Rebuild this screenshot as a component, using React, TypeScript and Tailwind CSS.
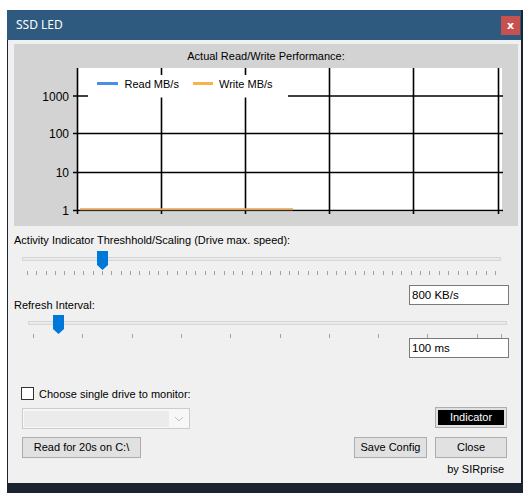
import React from "react";

const F = "font-['Liberation_Sans',Arial,sans-serif]";

function Chart() {
  const hy = [52, 89.5, 128.5, 166.5];
  const labels = ["1000", "100", "10", "1"];
  const vx = [63.5, 147.5, 231.5, 315.5, 399.5, 484.5];
  return (
    <div className="ml-[6px] mt-[4px] w-[504px] h-[182px] bg-[#d3d3d3]">
      <div className="h-[24px] pt-[5px] text-center text-[11px] leading-[14px] text-black">
        Actual Read/Write Performance:
      </div>
      <svg width="504" height="158" viewBox="0 24 504 158" className="block">
        <rect x="63" y="24" width="425" height="144" fill="#ffffff" />
        {hy.map((y, i) => (
          <line key={"h" + i} x1="59" x2="489" y1={y} y2={y} stroke="#000" strokeWidth="1.6" />
        ))}
        {vx.map((x, i) => (
          <line key={"v" + i} x1={x} x2={x} y1="24" y2="170" stroke="#000" strokeWidth="1.6" />
        ))}
        <rect x="74" y="31" width="200" height="22.5" fill="#ffffff" />
        <line x1="83" x2="104" y1="39.5" y2="39.5" stroke="#4a8fe6" strokeWidth="3" />
        <text x="110.5" y="44" fontSize="11" fill="#000">Read MB/s</text>
        <line x1="179" x2="199" y1="39.5" y2="39.5" stroke="#f8b24c" strokeWidth="3" />
        <text x="205" y="44" fontSize="11" fill="#000">Write MB/s</text>
        {hy.map((y, i) => (
          <text key={"l" + i} x="55" y={y + 4.5} fontSize="12" textAnchor="end" fill="#000">
            {labels[i]}
          </text>
        ))}
        <line x1="66" x2="279" y1="165.2" y2="165.2" stroke="#dca560" strokeWidth="2" />
      </svg>
    </div>
  );
}

function Thumb({ left }: { left: number }) {
  return (
    <svg
      width="11"
      height="19"
      viewBox="0 0 11 19"
      className="absolute top-[1px]"
      style={{ left }}
    >
      <polygon points="0,0 11,0 11,14 5.5,19 0,14" fill="#0078d7" />
    </svg>
  );
}

function App() {
  const ticks1 = Array.from({ length: 51 }, (_, i) => 19 + i * 9.36);
  const ticks2 = [...Array.from({ length: 10 }, (_, i) => 25 + i * 49.3), 493];
  return (
    <div className={`w-[528px] h-[493px] bg-white pl-[7px] pt-[10px] overflow-hidden ${F}`}>
      <div className="w-[516px] h-[483px] bg-[#1b2230]">
        {/* Title bar */}
        <div className="w-[514px] h-[30px] bg-[#2d5a7e] flex items-center justify-between">
          <span className="ml-[9px] text-white text-[12px] font-['Noto_Sans',sans-serif] leading-none">
            SSD LED
          </span>
          <div className="w-[19px] h-[19px] mr-[1px] bg-[#c75050] flex items-center justify-center text-white text-[11px] font-bold leading-none font-['DejaVu_Sans',sans-serif]">
            x
          </div>
        </div>
        {/* Body */}
        <div className="ml-[1px] w-[513px] h-[443px] bg-[#f0f0f0] flex flex-col text-[11px] text-black">
          <Chart />
          <div className="ml-[6px] mt-[7px] h-[14px] leading-[14px]">
            Activity Indicator Threshhold/Scaling (Drive max. speed):
          </div>
          <div className="relative mt-[3px] h-[26px]">
            <div className="mt-[7px] ml-[14px] w-[479px] h-[4px] bg-[#e7eaea] border border-[#d6d6d6]" />
            <svg width="513" height="4" className="block mt-[10px]">
              {ticks1.map((x, i) => (
                <line key={i} x1={Math.round(x) + 0.5} x2={Math.round(x) + 0.5} y1="0" y2="4" stroke="#a0a0a0" />
              ))}
            </svg>
            <Thumb left={89} />
          </div>
          <div className="mt-[9px] h-[27px] flex justify-between">
            <div className="self-end ml-[6px] leading-[14px]">Refresh Interval:</div>
            <div className="mr-[12px] w-[100px] h-[20px] bg-white border border-[#7a7a7a] pl-[2px] leading-[18px] text-[11.5px]">
              800 KB/s
            </div>
          </div>
          <div className="relative mt-[2px] h-[24px]">
            <div className="mt-[7px] ml-[20px] w-[479px] h-[4px] bg-[#e7eaea] border border-[#d6d6d6]" />
            <svg width="513" height="4" className="block mt-[9px]">
              {ticks2.map((x, i) => (
                <line key={i} x1={Math.round(x) + 0.5} x2={Math.round(x) + 0.5} y1="0" y2="4" stroke="#a0a0a0" />
              ))}
            </svg>
            <Thumb left={45} />
          </div>
          <div className="flex justify-end">
            <div className="mr-[12px] w-[100px] h-[20px] bg-white border border-[#7a7a7a] pl-[2px] leading-[18px] text-[11.5px]">
              100 ms
            </div>
          </div>
          <div className="mt-[29px] h-[13px] flex items-center ml-[13px]">
            <div className="w-[13px] h-[13px] bg-white border border-[#333333]" />
            <span className="ml-[5px] leading-[14px]">Choose single drive to monitor:</span>
          </div>
          <div className="mt-[7px] flex justify-between">
            <div className="mt-[1px] ml-[14px] w-[168px] h-[21px] border border-[#cccccc] bg-[#f7f7f7] flex items-center p-[1px]">
              <div className="w-[146px] h-[16px] bg-[#ebebeb]" />
              <svg width="18" height="16" viewBox="0 0 18 16" className="ml-[1px]">
                <polyline points="5,6 9,10 13,6" fill="none" stroke="#bcbcbc" strokeWidth="1" />
              </svg>
            </div>
            <div className="mr-[14px] w-[72px] h-[21px] border border-[#adadad] bg-[#e1e1e1] p-[2px]">
              <div className="w-full h-full bg-black text-white flex items-center justify-center leading-none">
                Indicator
              </div>
            </div>
          </div>
          <div className="mt-[8px] flex items-center">
            <button className="ml-[14px] w-[119px] h-[21px] bg-[#e1e1e1] border border-[#adadad] leading-none">
              Read for 20s on C:\
            </button>
            <div className="flex-1" />
            <button className="w-[73px] h-[21px] bg-[#e1e1e1] border border-[#adadad] leading-none">
              Save Config
            </button>
            <button className="ml-[8px] mr-[14px] w-[72px] h-[21px] bg-[#e1e1e1] border border-[#adadad] leading-none">
              Close
            </button>
          </div>
          <div className="mt-[4px] mr-[17px] self-end leading-[14px]">by SIRprise</div>
        </div>
      </div>
    </div>
  );
}

export default App;
